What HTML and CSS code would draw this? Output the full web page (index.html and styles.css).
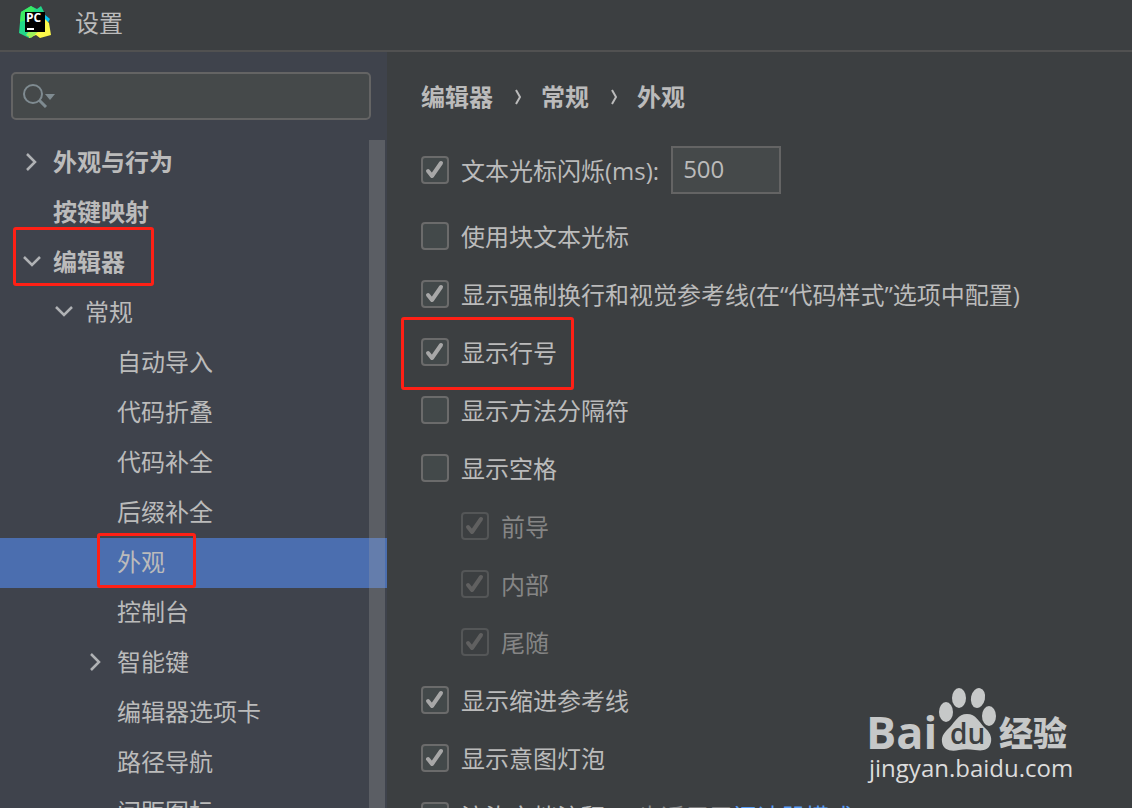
FILE: index.html
```html
<!DOCTYPE html>
<html lang="zh-CN">
<head>
    <meta charset="UTF-8">
    <meta name="viewport" content="width=device-width, initial-scale=1.0">
    <title>设置</title>
    <link rel="stylesheet" href="styles.css">
</head>
<body>
    <header class="title-bar">
        <svg class="logo" viewBox="0 0 32 32" aria-hidden="true">
            <path d="M2 6 L12 0 L18 3 L22 0 L26 8 L20 26 L10 32 L0 27 Z" fill="#21d789"/>
            <path d="M2 6 L12 0 L16 3 L8 14 L1 16 Z" fill="#3bea62"/>
            <path d="M25 8 L31 13 L27 20 L24 12 Z" fill="#07c3f2"/>
            <path d="M25 12 L30 17 L32 29 L21 32 L17 29 L10 32 L10 24 Z" fill="#fcf84a"/>
            <path d="M10 25 L20 25 L12 32 L7 29 Z" fill="#9bf05a"/>
            <rect x="6" y="6" width="20" height="20" fill="#000"/>
            <text class="logo-text" x="7" y="16">PC</text>
            <rect x="8" y="22" width="7" height="2" fill="#fff"/>
        </svg>
        <h1>设置</h1>
    </header>

    <div class="window">
        <aside class="sidebar">
            <div class="search">
                <svg class="search-icon" viewBox="0 0 32 24" aria-hidden="true">
                    <circle cx="10" cy="10" r="9" fill="none" stroke="#7f8b91" stroke-width="2"/>
                    <path d="M16 16 L23 23" stroke="#7f8b91" stroke-width="3"/>
                    <path d="M22 10 L32 10 L27 16 Z" fill="#7f8b91"/>
                </svg>
                <input type="text" class="search-input" aria-label="搜索">
            </div>
            <nav>
                <ul class="tree">
                    <li class="level-1"><svg class="arrow" viewBox="0 0 20 20"><path d="M5 2 L13 10 L5 18"/></svg><a href="#">外观与行为</a></li>
                    <li class="level-1"><span class="arrow"></span><a href="#">按键映射</a></li>
                    <li class="level-1"><svg class="arrow" viewBox="0 0 20 20"><path d="M2 5 L10 13 L18 5"/></svg><a href="#">编辑器</a><span class="mark mark-editor"></span></li>
                    <li class="level-2"><svg class="arrow" viewBox="0 0 20 20"><path d="M2 5 L10 13 L18 5"/></svg><a href="#">常规</a></li>
                    <li class="level-3"><span class="arrow"></span><a href="#">自动导入</a></li>
                    <li class="level-3"><span class="arrow"></span><a href="#">代码折叠</a></li>
                    <li class="level-3"><span class="arrow"></span><a href="#">代码补全</a></li>
                    <li class="level-3"><span class="arrow"></span><a href="#">后缀补全</a></li>
                    <li class="level-3 selected"><span class="arrow"></span><a href="#">外观</a><span class="mark mark-page"></span></li>
                    <li class="level-3"><span class="arrow"></span><a href="#">控制台</a></li>
                    <li class="level-3"><svg class="arrow" viewBox="0 0 20 20"><path d="M5 2 L13 10 L5 18"/></svg><a href="#">智能键</a></li>
                    <li class="level-3"><span class="arrow"></span><a href="#">编辑器选项卡</a></li>
                    <li class="level-3"><span class="arrow"></span><a href="#">路径导航</a></li>
                    <li class="level-3"><span class="arrow"></span><a href="#">间距图标</a></li>
                </ul>
            </nav>
            <div class="scrollbar"></div>
        </aside>

        <main class="content">
            <h2 class="breadcrumb">
                <span>编辑器</span>
                <svg class="separator" viewBox="0 0 8 16"><path d="M3 1 L7 8 L3 15"/></svg>
                <span>常规</span>
                <svg class="separator" viewBox="0 0 8 16"><path d="M3 1 L7 8 L3 15"/></svg>
                <span>外观</span>
            </h2>
            <form class="options">
                <div class="option option-first">
                    <input type="checkbox" id="blink" checked>
                    <label for="blink">文本光标闪烁(ms):</label>
                    <input type="text" class="number" value="500" aria-label="文本光标闪烁(ms)">
                </div>
                <div class="option">
                    <input type="checkbox" id="block">
                    <label for="block">使用块文本光标</label>
                </div>
                <div class="option">
                    <input type="checkbox" id="wrap" checked>
                    <label for="wrap">显示强制换行和视觉参考线(在“代码样式”选项中配置)</label>
                </div>
                <div class="option">
                    <input type="checkbox" id="lines" checked>
                    <label for="lines">显示行号</label>
                    <span class="mark mark-lines"></span>
                </div>
                <div class="option">
                    <input type="checkbox" id="methods">
                    <label for="methods">显示方法分隔符</label>
                </div>
                <div class="option">
                    <input type="checkbox" id="spaces">
                    <label for="spaces">显示空格</label>
                </div>
                <div class="option nested">
                    <input type="checkbox" id="leading" checked disabled>
                    <label for="leading">前导</label>
                </div>
                <div class="option nested">
                    <input type="checkbox" id="inner" checked disabled>
                    <label for="inner">内部</label>
                </div>
                <div class="option nested">
                    <input type="checkbox" id="trailing" checked disabled>
                    <label for="trailing">尾随</label>
                </div>
                <div class="option">
                    <input type="checkbox" id="indent" checked>
                    <label for="indent">显示缩进参考线</label>
                </div>
                <div class="option">
                    <input type="checkbox" id="bulb" checked>
                    <label for="bulb">显示意图灯泡</label>
                </div>
                <div class="option">
                    <input type="checkbox" id="docs">
                    <label for="docs">渲染文档注释</label>
                    <span class="hint">也适用于<a href="#">阅读器模式</a></span>
                </div>
            </form>
        </main>
    </div>

    <svg class="watermark" viewBox="0 0 210 104" role="img" aria-label="Baidu 经验">
        <g fill="#c6c8c8">
            <text class="wm-brand" x="-2" y="63">Bai</text>
            <ellipse cx="78" cy="26" rx="7" ry="10"/>
            <ellipse cx="91" cy="12" rx="7" ry="10"/>
            <ellipse cx="110" cy="12" rx="7" ry="10" transform="rotate(12 110 12)"/>
            <ellipse cx="121" cy="30" rx="7" ry="10"/>
            <path d="M99 28 C108 28 111 36 116 41 C122 46 124 51 123 56 C121 65 114 65 107 64 C101 63 96 63 91 64 C83 66 75 64 74 56 C73 49 78 45 82 41 C87 36 90 28 99 28 Z"/>
            <text class="wm-cn" x="131" y="60">经验</text>
        </g>
        <text class="wm-du" x="82" y="58">du</text>
        <text class="wm-url" x="1" y="91">jingyan.baidu.com</text>
    </svg>
</body>
</html>
```

FILE: styles.css
```css
* {
    box-sizing: border-box;
}
body {
    margin: 0;
    height: 100vh;
    display: flex;
    flex-direction: column;
    overflow: hidden;
    position: relative;
    background-color: #3c3f41;
    color: #bbbbbb;
    font-family: "Open Sans", "Noto Sans CJK SC", sans-serif;
    font-size: 24px;
    line-height: 32px;
}
h1, h2 {
    margin: 0;
    font-size: 24px;
}
a {
    color: inherit;
    text-decoration: none;
}

/* Title bar */
.title-bar {
    flex: none;
    display: flex;
    align-items: center;
    gap: 24px;
    height: 52px;
    padding: 0 19px 6px;
    border-bottom: 2px solid #515151;
}
.title-bar h1 {
    font-weight: normal;
    padding-top: 2px;
}
.logo {
    width: 32px;
    height: 32px;
}
.logo-text {
    font-size: 12px;
    font-weight: bold;
    fill: #fff;
}

.window {
    flex: 1;
    display: flex;
    min-height: 0;
}

/* Sidebar */
.sidebar {
    flex: none;
    position: relative;
    width: 387px;
    padding-top: 20px;
    background-color: #3f434c;
    overflow: hidden;
}
.search {
    display: flex;
    align-items: center;
    height: 48px;
    margin: 0 16px 18px 11px;
    padding: 0 10px;
    border: 2px solid #646464;
    border-radius: 5px;
    background-color: #45494a;
}
.search-icon {
    width: 32px;
    height: 24px;
}
.search-input {
    flex: 1;
    min-width: 0;
    border: none;
    outline: none;
    background: none;
    color: inherit;
    font: inherit;
}
.tree {
    list-style-type: none;
    margin: 0;
    padding: 0;
}
.tree li {
    display: flex;
    align-items: center;
    gap: 11px;
    height: 50px;
    padding-bottom: 3px;
    position: relative;
}
.tree .level-1 {
    padding-left: 22px;
    font-weight: bold;
}
.tree .level-2 {
    padding-left: 54px;
}
.tree .level-3 {
    padding-left: 86px;
}
.tree .selected {
    background-color: #4b6eaf;
}
.arrow {
    width: 20px;
    height: 20px;
}
.arrow path {
    fill: none;
    stroke: #b0b2b5;
    stroke-width: 2.5;
}
.scrollbar {
    position: absolute;
    top: 88px;
    right: 2px;
    bottom: 0;
    width: 16px;
    background-color: rgba(166, 166, 166, 0.28);
}

/* Settings page */
.content {
    flex: 1;
    min-width: 0;
    padding: 29px 34px 0;
    white-space: nowrap;
    overflow: hidden;
}
.breadcrumb {
    display: flex;
    align-items: center;
    gap: 20px;
}
.separator {
    width: 8px;
    height: 16px;
}
.separator path {
    fill: none;
    stroke: #bbbbbb;
    stroke-width: 2;
}
.options {
    padding-top: 24px;
}
.option {
    display: flex;
    align-items: center;
    gap: 12px;
    height: 58px;
    position: relative;
}
.option-first {
    height: 66px;
    margin-bottom: 4px;
}
.nested {
    padding-left: 40px;
    color: #858585;
}
.option label {
    padding-top: 2px;
}
.option input[type="checkbox"] {
    appearance: none;
    flex: none;
    width: 28px;
    height: 28px;
    margin: 0;
    border: 2px solid #6b6b6b;
    border-radius: 4px;
    background-color: #43494a;
}
.option input[type="checkbox"]:checked {
    background-image: url("data:image/svg+xml,%3Csvg xmlns='http://www.w3.org/2000/svg' viewBox='0 0 24 24'%3E%3Cpath d='M5 13 L9 18 L18 5' fill='none' stroke='%23a7a7a7' stroke-width='4' stroke-linecap='round' stroke-linejoin='round'/%3E%3C/svg%3E");
}
.option input[type="checkbox"]:disabled {
    border-color: #545657;
    background-color: #3c3f41;
}
.option input[type="checkbox"]:disabled:checked {
    background-image: url("data:image/svg+xml,%3Csvg xmlns='http://www.w3.org/2000/svg' viewBox='0 0 24 24'%3E%3Cpath d='M5 13 L9 18 L18 5' fill='none' stroke='%23606060' stroke-width='4' stroke-linecap='round' stroke-linejoin='round'/%3E%3C/svg%3E");
}
.option .number {
    width: 110px;
    height: 48px;
    padding: 0 10px 3px;
    border: 2px solid #646464;
    background-color: #45494a;
    color: inherit;
    font: inherit;
}
.hint {
    padding: 2px 0 0 20px;
    color: #8c8c8c;
}
.hint a {
    color: #589df6;
}

/* Red frames around the steps */
.mark {
    position: absolute;
    border: 3px solid #ff2015;
    border-radius: 3px;
    pointer-events: none;
}
.mark-editor {
    left: 13px;
    top: -11px;
    width: 141px;
    height: 59px;
}
.mark-page {
    left: 97px;
    top: -5px;
    width: 99px;
    height: 55px;
}
.mark-lines {
    left: -20px;
    top: -6px;
    width: 173px;
    height: 73px;
}

/* Watermark */
.watermark {
    position: absolute;
    right: 54px;
    bottom: 18px;
    width: 210px;
    height: 104px;
    overflow: visible;
}
.wm-brand {
    font-family: "Open Sans", sans-serif;
    font-size: 45px;
    font-weight: bold;
}
.wm-cn {
    font-size: 34px;
    font-weight: 900;
}
.wm-du {
    font-family: "Open Sans", sans-serif;
    font-size: 28px;
    font-weight: 600;
    fill: #3c3f41;
}
.wm-url {
    font-size: 24px;
    font-weight: 500;
    fill: #dcdcdc;
}
```
